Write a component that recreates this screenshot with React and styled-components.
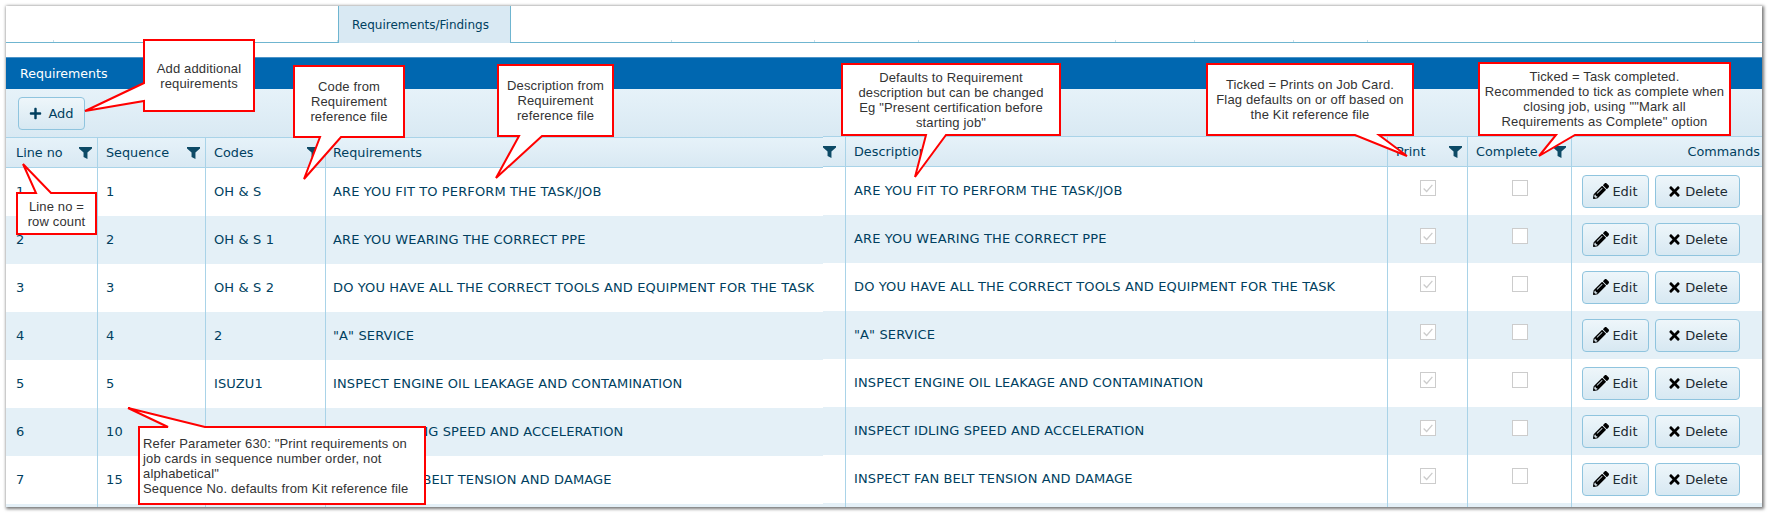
import React from 'react';
import styled, { createGlobalStyle } from 'styled-components';
import { FaPencilAlt, FaPlus, FaTimes } from 'react-icons/fa';

const lineColor = '#a9d3e8';
const textColor = '#003f5f';
const barGradient = 'linear-gradient(#e6f2f9, #d9e9f3)';

const rows = [
  { line: '1', seq: '1', code: 'OH & S', text: 'ARE YOU FIT TO PERFORM THE TASK/JOB' },
  { line: '2', seq: '2', code: 'OH & S 1', text: 'ARE YOU WEARING THE CORRECT PPE' },
  { line: '3', seq: '3', code: 'OH & S 2', text: 'DO YOU HAVE ALL THE CORRECT TOOLS AND EQUIPMENT FOR THE TASK' },
  { line: '4', seq: '4', code: '2', text: '"A" SERVICE' },
  { line: '5', seq: '5', code: 'ISUZU1', text: 'INSPECT ENGINE OIL LEAKAGE AND CONTAMINATION' },
  { line: '6', seq: '10', code: '', text: 'INSPECT IDLING SPEED AND ACCELERATION' },
  { line: '7', seq: '15', code: '', text: 'INSPECT FAN BELT TENSION AND DAMAGE' },
];

const tabWidths = [48, 284, 173, 161, 143, 104, 197, 79, 99, 74];

const callouts = [
  {
    x: 144, y: 40, w: 110, h: 71,
    tail: '144,83 85,111 144,101',
    lines: ['Add additional', 'requirements'],
  },
  {
    x: 294, y: 66, w: 110, h: 71,
    tail: '320,137 304,179 341,137',
    lines: ['Code from', 'Requirement', 'reference file'],
  },
  {
    x: 498, y: 65, w: 115, h: 71,
    tail: '519,136 496,178 542,136',
    lines: ['Description from', 'Requirement', 'reference file'],
  },
  {
    x: 842, y: 64, w: 218, h: 71,
    tail: '926,135 915,177 946,135',
    lines: ['Defaults to Requirement', 'description but can be changed', 'Eg "Present certification before', 'starting job"'],
  },
  {
    x: 1207, y: 64, w: 206, h: 71,
    tail: '1355,135 1407,156 1379,135',
    lines: ['Ticked = Prints on Job Card.', 'Flag defaults on or off based on', 'the Kit reference file'],
  },
  {
    x: 1479, y: 63, w: 251, h: 72,
    tail: '1556,135 1539,156 1575,135',
    lines: ['Ticked = Task completed.', 'Recommended to tick as complete when', 'closing job, using ""Mark all', 'Requirements as Complete" option'],
  },
  {
    x: 17, y: 193, w: 79, h: 41,
    tail: '36,193 23,164 51,193',
    lines: ['Line no =', 'row count'],
  },
  {
    x: 139, y: 427, w: 286, h: 77, left: true,
    tail: '168,427 128,408 205,427',
    lines: ['Refer Parameter 630: "Print requirements on', 'job cards in sequence number order, not', 'alphabetical"', 'Sequence No. defaults from Kit reference file'],
  },
];

const calloutPoints = ({ x, y, w, h, tail }) => {
  const points = tail.split(' ');
  // the tail leaves from the top, bottom or left edge of the box
  const [firstX, firstY] = points[0].split(',').map(Number);
  const corners = [`${x},${y}`, `${x + w},${y}`, `${x + w},${y + h}`, `${x},${y + h}`];
  if (firstY === y) return [corners[0], ...points, corners[1], corners[2], corners[3]].join(' ');
  if (firstY === y + h) return [corners[0], corners[1], corners[2], ...[...points].reverse(), corners[3]].join(' ');
  if (firstX === x) return [corners[0], corners[1], corners[2], corners[3], ...[...points].reverse()].join(' ');
  return corners.join(' ');
};

const FilterIcon = () => (
  <FilterSvg viewBox="0 0 12 12" preserveAspectRatio="none">
    <path d="M0 0H12V1.6L7.8 5.6V12L4.2 10V5.6L0 1.6Z" />
  </FilterSvg>
);

const App = () => (
  <Page>
    <GlobalStyle />
    <Frame>
      <TabStrip>
        {tabWidths.map((width, i) =>
          i === 2 ? (
            <ActiveTab key={i} $width={width}>Requirements/Findings</ActiveTab>
          ) : (
            <Tab key={i} $width={width} />
          ),
        )}
      </TabStrip>
      <PanelTitle>Requirements</PanelTitle>
      <Toolbar>
        <AddButton>
          <FaPlus size={13} />
          Add
        </AddButton>
      </Toolbar>
      <Table>
        <LeftPane>
          <HeaderRow>
            <HeaderCell>Line no<FilterSlot><FilterIcon /></FilterSlot></HeaderCell>
            <HeaderCell>Sequence<FilterSlot><FilterIcon /></FilterSlot></HeaderCell>
            <HeaderCell>Codes<FilterSlot><FilterIcon /></FilterSlot></HeaderCell>
            <HeaderCell $last>Requirements</HeaderCell>
          </HeaderRow>
          {[...rows, {}].map((row, i) => (
            <BodyRow key={i} $alt={i % 2 === 1}>
              <Cell>{row.line}</Cell>
              <Cell>{row.seq}</Cell>
              <Cell>{row.code}</Cell>
              <Cell $last>{row.text}</Cell>
            </BodyRow>
          ))}
        </LeftPane>
        <RightPane>
          <RightHeaderRow>
            <FilterCell><FilterIcon /></FilterCell>
            <HeaderCell>Description</HeaderCell>
            <HeaderCell>Print<FilterSlot><FilterIcon /></FilterSlot></HeaderCell>
            <HeaderCell>Complete<FilterSlot><FilterIcon /></FilterSlot></HeaderCell>
            <CommandsHead>Commands</CommandsHead>
          </RightHeaderRow>
          {[...rows, {}].map((row, i) => (
            <RightBodyRow key={i} $alt={i % 2 === 1}>
              <Spacer />
              <Cell>{row.text}</Cell>
              <CheckCell>{row.text && <CheckBox><Tick viewBox="0 0 16 16"><path d="M3 8.5L6.5 12L13 4.5" /></Tick></CheckBox>}</CheckCell>
              <CheckCell>{row.text && <CheckBox />}</CheckCell>
              <CommandCell>
                {row.text && (
                  <>
                    <EditButton><FaPencilAlt size={16} />Edit</EditButton>
                    <DeleteButton><FaTimes size={15} />Delete</DeleteButton>
                  </>
                )}
              </CommandCell>
            </RightBodyRow>
          ))}
        </RightPane>
      </Table>
    </Frame>
    {callouts.map((c) => (
      <React.Fragment key={c.lines[0]}>
        <CalloutShape viewBox="0 0 1772 517">
          <polygon points={calloutPoints(c)} />
        </CalloutShape>
        <CalloutText $x={c.x} $y={c.y} $w={c.w} $h={c.h} $left={c.left}>
          {c.lines.map((line) => (
            <div key={line}>{line}</div>
          ))}
        </CalloutText>
      </React.Fragment>
    ))}
  </Page>
);

export default App;

// styled components

const GlobalStyle = createGlobalStyle`
  body {
    margin: 0;
    background: #fff;
    font-family: "DejaVu Sans", Verdana, sans-serif;
    font-size: 13px;
    color: ${textColor};
  }
`;

const Page = styled.div`
  position: relative;
  width: 1772px;
  height: 517px;
  overflow: hidden;
  padding: 6px 0 0 6px;
  box-sizing: border-box;
`;

const Frame = styled.div`
  width: 1756px;
  height: 501px;
  overflow: hidden;
  background: #fff;
  box-shadow: 1px 1px 3px 1px #777;
`;

const TabStrip = styled.div`
  display: flex;
  height: 36px;
  border-bottom: 1px solid #6fb5d0;
  margin-bottom: 14px;
`;

const Tab = styled.div`
  flex: 0 0 ${(p) => p.$width}px;
  background: linear-gradient(#c5dfe9, #c5dfe9) right bottom / 1px 2px no-repeat;
`;

const ActiveTab = styled.div`
  flex: 0 0 ${(p) => p.$width}px;
  height: 37px;
  box-sizing: border-box;
  background: #d9e9f3;
  border: 1px solid #6fb5d0;
  border-width: 0 1px;
  padding-right: 8px;
  display: flex;
  align-items: center;
  justify-content: center;
  font-size: 12px;
`;

const PanelTitle = styled.div`
  height: 32px;
  line-height: 33px;
  padding-left: 14px;
  background: #0067b0;
  color: #fff;
  font-size: 12.6px;
  box-shadow: inset 0 1px 0 #4d94c8;
`;

const Toolbar = styled.div`
  height: 48px;
  box-sizing: border-box;
  padding: 8px 12px;
  background: ${barGradient};
`;

const Button = styled.button`
  display: inline-flex;
  align-items: center;
  justify-content: center;
  height: 33px;
  box-sizing: border-box;
  padding: 0;
  border: 1px solid #8fc4de;
  border-radius: 4px;
  background: linear-gradient(#eef6fa, #d7e8f2);
  color: #1c2b33;
  font: inherit;
`;

const AddButton = styled(Button)`
  width: 67px;
  gap: 6px;
  color: ${textColor};
`;

const EditButton = styled(Button)`
  width: 67px;
  gap: 3px;
  svg {
    color: #000;
  }
`;

const DeleteButton = styled(Button)`
  width: 85px;
  gap: 3px;
  svg {
    color: #000;
  }
`;

const Table = styled.div`
  display: flex;
  align-items: flex-start;
`;

const LeftPane = styled.div`
  flex: 0 0 817px;
`;

const RightPane = styled.div`
  flex: 0 0 939px;
  margin-top: -1px;
`;

const HeaderRow = styled.div`
  display: grid;
  grid-template-columns: 92px 108px 120px 497px;
  height: 31px;
  box-sizing: border-box;
  border-top: 1px solid ${lineColor};
  border-bottom: 1px solid ${lineColor};
  background: ${barGradient};
  & > :first-child {
    padding-left: 10px;
  }
`;

const RightHeaderRow = styled(HeaderRow)`
  grid-template-columns: 23px 542px 80px 104px 190px;
  & > :first-child {
    padding-left: 0;
  }
`;

const BodyRow = styled.div`
  display: grid;
  grid-template-columns: 92px 108px 120px 497px;
  height: 48px;
  background: ${(p) => (p.$alt ? '#e4f0f7' : '#fff')};
  & > :first-child {
    padding-left: 10px;
  }
`;

const RightBodyRow = styled(BodyRow)`
  grid-template-columns: 23px 542px 80px 104px 190px;
  & > :first-child {
    padding-left: 0;
  }
`;

const HeaderCell = styled.div`
  display: flex;
  align-items: center;
  justify-content: space-between;
  padding: 0 5px 0 ${(p) => (p.$last ? 7 : 8)}px;
  border-right: ${(p) => (p.$last ? 'none' : `1px solid ${lineColor}`)};
  min-width: 0;
  font-size: 12.8px;
`;

const FilterCell = styled.div`
  display: flex;
  align-items: center;
  border-right: 1px solid ${lineColor};
`;

const FilterSlot = styled.span`
  display: flex;
`;

const CommandsHead = styled.div`
  display: flex;
  align-items: center;
  justify-content: flex-end;
  padding-right: 2px;
  font-size: 12.8px;
`;

const FilterSvg = styled.svg`
  width: 13px;
  height: 12px;
  fill: #0d4a66;
`;

const Cell = styled.div`
  display: flex;
  align-items: center;
  padding: 0 0 2px ${(p) => (p.$last ? 7 : 8)}px;
  border-right: ${(p) => (p.$last ? 'none' : `1px solid ${lineColor}`)};
  white-space: nowrap;
  letter-spacing: 0.12px;
`;

const Spacer = styled.div`
  border-right: 1px solid ${lineColor};
`;

const CheckCell = styled.div`
  display: flex;
  align-items: center;
  justify-content: center;
  border-right: 1px solid ${lineColor};
  padding-bottom: 6px;
`;

const CheckBox = styled.span`
  display: block;
  width: 16px;
  height: 16px;
  box-sizing: border-box;
  border: 1px solid #ccc;
  background: #fff;
`;

const Tick = styled.svg`
  display: block;
  width: 14px;
  height: 14px;
  fill: none;
  stroke: #ccc;
  stroke-width: 1.5;
`;

const CommandCell = styled.div`
  display: flex;
  align-items: center;
  gap: 6px;
  padding-left: 10px;
`;

const CalloutShape = styled.svg`
  position: absolute;
  left: 0;
  top: 0;
  width: 1772px;
  height: 517px;
  pointer-events: none;
  polygon {
    fill: #fff;
    stroke: #f00;
    stroke-width: 2;
  }
`;

const CalloutText = styled.div`
  position: absolute;
  left: ${(p) => p.$x}px;
  top: ${(p) => p.$y}px;
  width: ${(p) => p.$w}px;
  height: ${(p) => p.$h}px;
  box-sizing: border-box;
  display: flex;
  flex-direction: column;
  justify-content: center;
  padding-left: ${(p) => (p.$left ? 4 : 0)}px;
  text-align: ${(p) => (p.$left ? 'left' : 'center')};
  font-family: "Liberation Sans", Arial, sans-serif;
  font-size: 13px;
  letter-spacing: 0.15px;
  line-height: 15px;
  color: #333;
  white-space: nowrap;
`;
